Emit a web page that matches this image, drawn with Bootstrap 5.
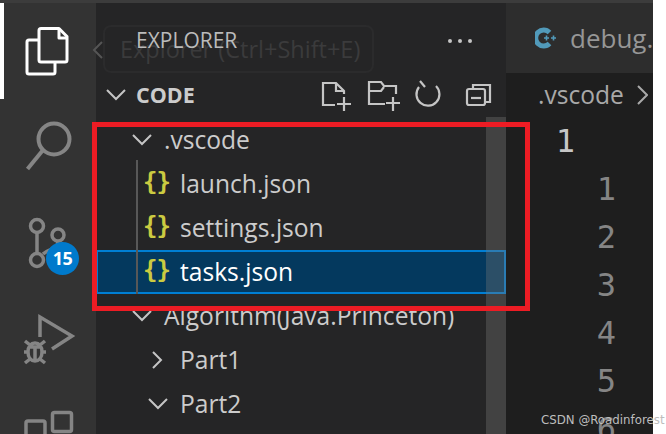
<!DOCTYPE html>
<html lang="en">
<head>
<meta charset="utf-8">
<title>Explorer</title>
<link href="https://cdn.jsdelivr.net/npm/bootstrap@5.3.0/dist/css/bootstrap.min.css" rel="stylesheet">
<style>
html,body{height:100%;overflow:hidden;background:#fff}
body{font-family:"Open Sans","Noto Sans",sans-serif;position:relative}
.shell{width:653px;height:434px;background:#252526;overflow:hidden}
.topstrip{height:3px;background:#3c3c3c;flex:none}
.mainrow{min-height:0;overflow:hidden}
.actbar{width:96px;background:#333;flex:none}
.actitem{height:96px;width:96px;display:block}
.actitem svg{display:block}
.actitem.on{box-shadow:inset 4px 0 0 #fff}
.sidebar{width:410px;position:relative;background:#252526;flex:none}
.titlebar{height:70px;padding:5px 34px 0 40px;color:#bbb;font-size:21px;position:relative}
.dots{gap:6px}
.dots i{display:block;width:4px;height:4px;border-radius:50%;background:#c5c5c5}
.secthead{height:44px;padding-left:10px;color:#ccc;font-weight:700;font-size:21.5px;position:relative}
.secthead .tw{width:30px}
.secticons{position:absolute;left:0;top:0}
.tree{padding-top:1px}
.trow{height:44px;color:#ccc;font-size:24.6px;line-height:44px;white-space:nowrap;padding:0}
.lv1{padding-left:36px}
.lv1 .tw{width:32px}
.lvf{padding-left:47px}
.lv2{padding-left:52px}
.lv2 .tw{width:32px}
.tw{display:flex;align-items:center;flex:none}
.braces{width:37px;flex:none;color:#cbcb41;font-family:"DejaVu Sans Mono",monospace;font-size:24px;font-weight:700;letter-spacing:-1px;line-height:40px}
.guided{position:relative}
.guided::before{content:"";position:absolute;left:40px;top:-2px;bottom:0;width:2px;background:#585858;z-index:2}
.picked{background:#04395e;color:#fff;box-shadow:inset 0 0 0 2px #007fd4}
.sbar{position:absolute;left:390px;top:114px;bottom:-10px;width:20px;background:rgba(121,121,121,.35);z-index:3}
.tipbox{position:absolute;left:7px;top:22px;width:271px;height:48px;border:2px solid #2b2b2c;border-radius:8px;color:#3b3b3c;font-size:23.5px;line-height:44px;padding-left:15px;white-space:nowrap;overflow:hidden}
.tiparrow{position:absolute;left:92px;top:40px;z-index:4}
.editor{width:147px;background:#1e1e1e;overflow:hidden;flex:none}
.tabstrip{height:70px;background:#2d2d2d;padding:0 0 0 29px;color:#969696;font-size:26px;white-space:nowrap}
.tabstrip svg{flex:none;margin-right:13px}
.crumbs{height:44px;padding-left:32px;color:#a9a9a9;font-size:24.6px;white-space:nowrap}
.crumbs svg{margin-left:12px;flex:none}
.lnum{height:48px;font-family:"DejaVu Sans Mono",monospace;font-size:32px;line-height:48px;color:#858585;text-align:right;width:110px}
.lnum.stick{color:#c6c6c6;width:69px}
.redbox{position:absolute;left:92px;top:122px;width:438px;height:189px;border:5px solid #ed1c24;z-index:5;pointer-events:none}
.mark15{position:absolute;left:46px;top:242px;width:33px;height:33px;border-radius:50%;background:#007acc;color:#fff;font-weight:700;font-size:18px;line-height:33px;text-align:center;letter-spacing:-.5px;z-index:2}
.wmark{position:absolute;left:541px;top:411px;font-family:"DejaVu Sans",sans-serif;font-size:11.8px;line-height:18px;color:#bdbdbd;white-space:nowrap;z-index:6}
</style>
</head>
<body>
<div class="shell d-flex flex-column">
  <div class="topstrip"></div>
  <div class="mainrow d-flex flex-grow-1">
    <nav class="actbar">
      <div class="actitem on">
        <svg width="96" height="96" viewBox="0 3 96 96" fill="none" stroke="#fff" stroke-width="3" stroke-linejoin="round">
          <path d="M38 40H29a2 2 0 0 0-2 2v30a2 2 0 0 0 2 2h24a2 2 0 0 0 2-2V63"/>
          <path d="M41 28.500h18l8 8V60a2 2 0 0 1-2 2H41a2 2 0 0 1-2-2V30.500a2 2 0 0 1 2-2z"/>
          <path d="M59 28.500V38h8"/>
        </svg>
      </div>
      <div class="actitem">
        <svg width="96" height="96" viewBox="0 99 96 96" fill="none" stroke="#858585" stroke-width="4">
          <circle cx="54" cy="139" r="15.500"/><path d="M43 150 27.500 169"/>
        </svg>
      </div>
      <div class="actitem">
        <svg width="96" height="96" viewBox="0 195 96 96" fill="none" stroke="#858585" stroke-width="3.500">
          <circle cx="37" cy="226" r="6.500"/><circle cx="37" cy="260" r="6.500"/><circle cx="58" cy="235" r="6"/>
          <path d="M37 232.500v21M43 254c6-6 15-4 15-13"/>
        </svg>
      </div>
      <div class="actitem">
        <svg width="96" height="96" viewBox="0 291 96 96" fill="none" stroke="#858585" stroke-width="3.500">
          <path d="M40 337v-20l32 19-20 13"/>
          <path d="M28 352c0-6 3-9 7-9s7 3 7 9-3 9-7 9-7-3-7-9zM29 347h12M35 347v13M25 341l5 4M45 341l-5 4M24 352h4M42 352h4M25 363l5-4M45 363l-5-4"/>
        </svg>
      </div>
      <div class="actitem">
        <svg width="96" height="96" viewBox="0 387 96 96" fill="none" stroke="#858585" stroke-width="3.500">
          <rect x="52.500" y="412.500" width="19" height="19" rx="2"/>
          <path d="M26 450v-27a2 2 0 0 1 2-2h15a2 2 0 0 1 2 2v27"/>
        </svg>
      </div>
    </nav>
    <aside class="sidebar">
      <div class="tipbox">Explorer (Ctrl+Shift+E)</div>
      <div class="titlebar d-flex align-items-center justify-content-between">
        <span>EXPLORER</span>
        <span class="dots d-flex"><i></i><i></i><i></i></span>
      </div>
      <div class="secthead d-flex align-items-center">
        <span class="tw"><svg width="20" height="12" viewBox="0 0 20 12" fill="none" stroke="#c5c5c5" stroke-width="2"><path d="M1 1l9 9 9-9"/></svg></span>
        <span>CODE</span>
        <svg class="secticons" width="410" height="44" viewBox="96 73 410 44" fill="none" stroke="#c5c5c5" stroke-width="2.200">
          <path d="M335 105h-12V83h13l8 8v3M336 83v8h8M337 104h14M344 97v14"/>
          <path d="M385 104h-16V82h12l3 4h12v8M369 91h12l3-4M386 103h14M393 97v14"/>
          <path d="M436 86a11.500 11.500 0 1 1-17 1M420 81l5 6"/>
          <path d="M473 89v-4h17v17h-5"/><rect x="467" y="89" width="18" height="16" rx="2"/><path d="M471 98h10"/>
        </svg>
      </div>
      <div class="tree list-group list-group-flush rounded-0 bg-transparent">
        <div class="trow lv1 d-flex">
          <span class="tw"><svg width="20" height="12" viewBox="0 0 20 12" fill="none" stroke="#c5c5c5" stroke-width="2"><path d="M1 1l9 9 9-9"/></svg></span>
          <span>.vscode</span>
        </div>
        <div class="guided">
          <div class="trow lvf d-flex"><span class="braces">{}</span><span>launch.json</span></div>
          <div class="trow lvf d-flex"><span class="braces">{}</span><span>settings.json</span></div>
          <div class="trow lvf d-flex picked"><span class="braces">{}</span><span>tasks.json</span></div>
        </div>
        <div class="trow lv1 d-flex">
          <span class="tw"><svg width="20" height="12" viewBox="0 0 20 12" fill="none" stroke="#c5c5c5" stroke-width="2"><path d="M1 1l9 9 9-9"/></svg></span>
          <span>Algorithm(Java.Princeton)</span>
        </div>
        <div class="trow lv2 d-flex">
          <span class="tw"><svg width="20" height="18" viewBox="0 0 20 18" fill="none" stroke="#c5c5c5" stroke-width="2"><path d="M5 1l8 8-8 8"/></svg></span>
          <span>Part1</span>
        </div>
        <div class="trow lv2 d-flex">
          <span class="tw"><svg width="20" height="12" viewBox="0 0 20 12" fill="none" stroke="#c5c5c5" stroke-width="2"><path d="M1 1l9 9 9-9"/></svg></span>
          <span>Part2</span>
        </div>
      </div>
      <div class="sbar"></div>
    </aside>
    <main class="editor">
      <div class="tabstrip d-flex align-items-center">
        <svg width="22" height="22" viewBox="0 0 22 22" fill="none" stroke="#519aba"><path d="M14.500 5.500a8 8 0 1 0 0 11" stroke-width="5"/><path d="M9 11h5M11.500 8.500v5M16 11h5M18.500 8.500v5" stroke-width="1.600"/></svg>
        <span>debug.cpp</span>
      </div>
      <div class="crumbs d-flex align-items-center">
        <span>.vscode</span>
        <svg width="12" height="20" viewBox="0 0 12 20" fill="none" stroke="#a9a9a9" stroke-width="2"><path d="M2 1l9 9-9 9"/></svg>
      </div>
      <div class="lnum stick">1</div>
      <div class="lnum">1</div>
      <div class="lnum">2</div>
      <div class="lnum">3</div>
      <div class="lnum">4</div>
      <div class="lnum">5</div>
      <div class="lnum">6</div>
    </main>
  </div>
</div>
<svg class="tiparrow" width="12" height="20" viewBox="0 0 12 20" fill="none" stroke="#555" stroke-width="2"><path d="M10 2 2 10l8 8"/></svg>
<span class="mark15">15</span>
<div class="redbox"></div>
<div class="wmark">CSDN @Roadinforest</div>
<script src="https://cdn.jsdelivr.net/npm/bootstrap@5.3.0/dist/js/bootstrap.bundle.min.js"></script>
</body>
</html>
